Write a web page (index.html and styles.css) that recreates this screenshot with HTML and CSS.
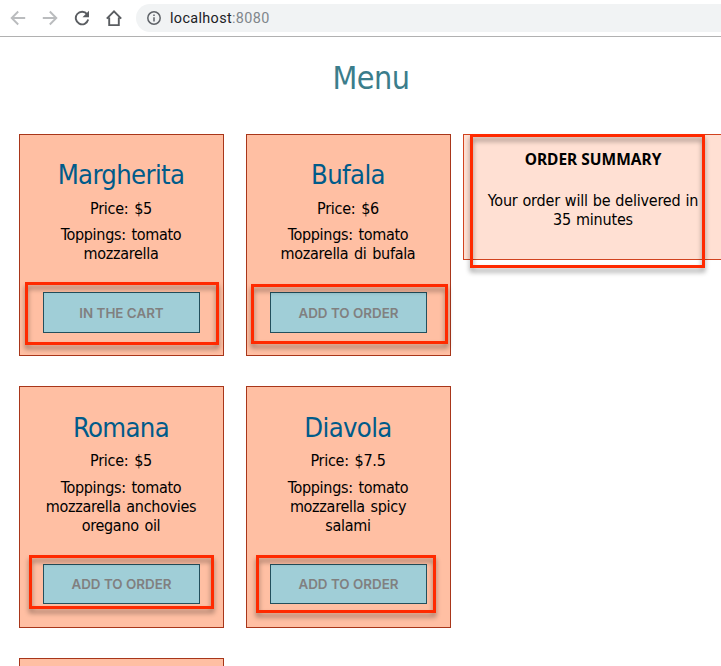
FILE: index.html
```html
<!DOCTYPE html>
<html lang="en">
<head>
<meta charset="utf-8">
<title>Menu</title>
<link rel="stylesheet" href="styles.css">
</head>
<body>
<header class="toolbar">
  <svg class="nav-icon muted" viewBox="0 0 16 16"><path d="M15.2 8H2M8.2 1.5 1.7 8l6.5 6.5"/></svg>
  <svg class="nav-icon muted" viewBox="0 0 16 16"><path d="M.8 8H14M7.8 1.5 14.3 8l-6.5 6.5"/></svg>
  <svg class="nav-icon" viewBox="0 0 16 16"><path d="M13.1 4.2A6.3 6.3 0 1 0 14.2 9.6"/><path class="solid" d="M15 .8v6.5H8.5z"/></svg>
  <svg class="nav-icon" viewBox="0 0 16 16"><path d="M.8 8.6 8 1.4l7.2 7.2M3.2 7.5v7.6h9.6V7.5"/></svg>
  <div class="address">
    <svg class="info" viewBox="0 0 14 14"><circle cx="7" cy="7" r="6.2"/><path d="M7 6.2v4.2M7 3.6v1.5"/></svg>
    <span class="url">localhost<span class="port">:8080</span></span>
  </div>
</header>
<main>
  <h1>Menu</h1>
  <div class="layout">
    <div class="cards">
      <article class="card">
        <h2>Margherita</h2>
        <p class="price">Price: $5</p>
        <p class="toppings">Toppings: tomato<br>mozzarella</p>
        <div class="action"><button disabled>IN THE CART</button><span class="mark mark-a"></span></div>
      </article>
      <article class="card">
        <h2>Bufala</h2>
        <p class="price">Price: $6</p>
        <p class="toppings">Toppings: tomato<br>mozarella di bufala</p>
        <div class="action"><button disabled>ADD TO ORDER</button><span class="mark mark-b"></span></div>
      </article>
      <article class="card tall">
        <h2>Romana</h2>
        <p class="price">Price: $5</p>
        <p class="toppings">Toppings: tomato<br>mozzarella anchovies<br>oregano oil</p>
        <div class="action"><button disabled>ADD TO ORDER</button><span class="mark mark-c"></span></div>
      </article>
      <article class="card tall">
        <h2>Diavola</h2>
        <p class="price">Price: $7.5</p>
        <p class="toppings">Toppings: tomato<br>mozzarella spicy<br>salami</p>
        <div class="action"><button disabled>ADD TO ORDER</button><span class="mark mark-d"></span></div>
      </article>
      <article class="card cut"></article>
    </div>
    <aside class="summary">
      <h3>ORDER SUMMARY</h3>
      <p>Your order will be delivered in<br>35 minutes</p>
      <span class="mark mark-e"></span>
    </aside>
  </div>
</main>
</body>
</html>
```
FILE: styles.css
```css
* { box-sizing: border-box; }
html, body { height: 100%; }
body {
  margin: 0;
  overflow: hidden;
  background: #fff;
  color: #000;
  font: 16px/19px Tahoma, "DejaVu Sans Condensed", "DejaVu Sans", sans-serif;
  font-stretch: condensed;
}
h1, h2, h3, p { margin: 0; font-weight: 400; }

.toolbar {
  display: flex;
  align-items: center;
  gap: 16px;
  height: 37px;
  padding-left: 10px;
  border-bottom: 1px solid #b1b1b1;
}
.nav-icon {
  flex: none;
  width: 16px;
  height: 16px;
  fill: none;
  stroke: #5a5d61;
  stroke-width: 1.9;
}
.nav-icon.muted { stroke: #babcbe; }
.nav-icon .solid { fill: #5a5d61; stroke: none; }
.address {
  display: flex;
  align-items: center;
  flex: 1;
  gap: 9px;
  height: 28px;
  margin-left: -2px;
  padding-left: 11px;
  border-radius: 14px 0 0 14px;
  background: #f1f3f4;
}
.info { width: 14px; height: 14px; fill: none; stroke: #5f6368; stroke-width: 1.5; }
.url { padding-top: 1px; font: 14.4px/20px Roboto, sans-serif; letter-spacing: .35px; color: #202124; }
.port { color: #80868b; }

h1 {
  width: 742px;
  padding-top: 22px;
  font-size: 32px;
  line-height: 39px;
  text-align: center;
  letter-spacing: -.5px;
  color: #3b7d8b;
}
.layout { display: flex; align-items: flex-start; gap: 12px; padding: 36px 0 0 19px; }
.cards {
  display: grid;
  flex: none;
  grid-template-columns: 205px 205px;
  grid-template-rows: 222px 242px 8px;
  gap: 30px 22px;
}
.card {
  border: 1px solid #a8361a;
  background: #ffbfa3;
  text-align: center;
  padding-top: 23px;
}
.card.cut { padding: 0; border-bottom: 0; }
.card h2 { margin-right: 1px; font-size: 27.2px; line-height: 33px; letter-spacing: -.65px; color: #005b8a; }
.price { margin-top: 8px; margin-right: 1px; letter-spacing: -.25px; word-spacing: 1.4px; }
.toppings { margin-top: 7px; margin-right: 1px; letter-spacing: -.3px; word-spacing: 1.4px; }
.card.tall { padding-top: 24px; }
.tall .price { margin-top: 7px; }
.tall .toppings { margin-top: 8px; }
.action { position: relative; margin: 29px 23px 0; }
button {
  display: block;
  width: 157px;
  height: 41px;
  padding: 0;
  border: 1px solid #234f5c;
  background: #a0ced7;
  color: #808080;
  font: 600 13.4px Inter, sans-serif;
}
.tall button { height: 40px; }

.summary {
  position: relative;
  flex: none;
  width: 260px;
  height: 126px;
  padding-top: 15px;
  border: 1px solid #d1431f;
  background: #ffe0d3;
  text-align: center;
}
.summary h3 { font: 700 15.5px/19px "Noto Sans", sans-serif; }
.summary p { margin-top: 22px; letter-spacing: -.2px; word-spacing: .6px; }

.mark {
  position: absolute;
  border: 3px solid #ff2a00;
  filter: drop-shadow(0 4px 2.5px rgba(0, 0, 0, .4));
}
.mark-a { left: -18px; top: -10px; width: 194px; height: 63px; }
.mark-b { left: -19px; top: -8px; width: 197px; height: 60px; }
.mark-c { left: -14px; top: -9px; width: 185px; height: 54px; }
.mark-d { left: -14px; top: -9px; width: 180px; height: 58px; }
.mark-e { left: 6px; top: -1px; width: 235px; height: 134px; }
```
